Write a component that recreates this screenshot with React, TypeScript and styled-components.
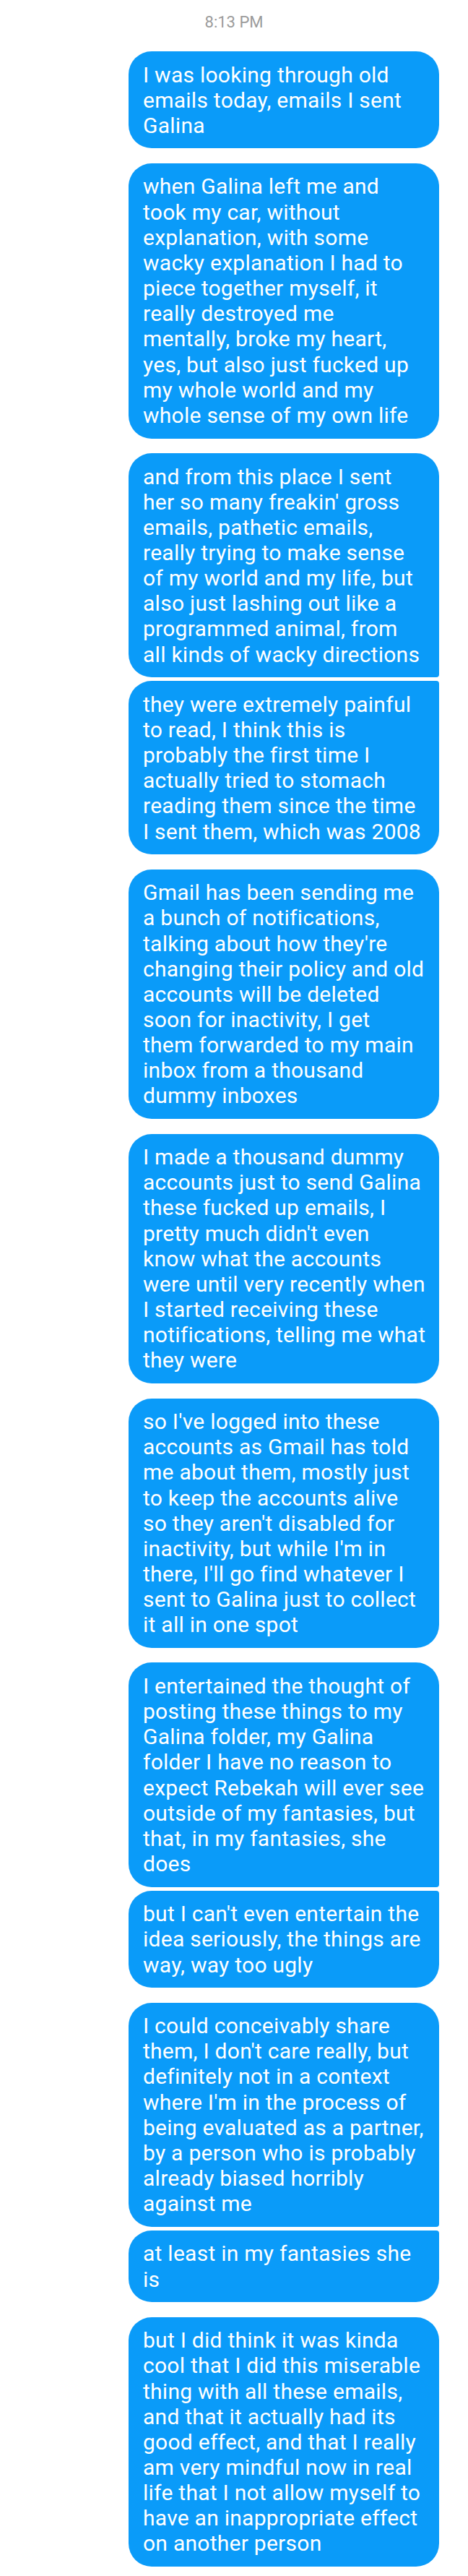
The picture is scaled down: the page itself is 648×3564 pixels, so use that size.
import React from "react";
import styled, { createGlobalStyle, css } from "styled-components";

const GlobalStyle = createGlobalStyle`
  html, body {
    margin: 0;
    padding: 0;
    background: #ffffff;
  }
  body {
    font-family: Roboto, "Noto Sans", "Liberation Sans", sans-serif;
    -webkit-font-smoothing: antialiased;
  }
`;

type Place = "single" | "first" | "last";

const Thread = styled.main`
  display: flex;
  flex-direction: column;
  align-items: stretch;
  width: 648px;
  padding: 18px 40px 12px 178px;
  box-sizing: border-box;
`;

const Timestamp = styled.div`
  align-self: center;
  margin-left: -138px;
  font-size: 22px;
  line-height: normal;
  color: #9b9b9b;
  margin-bottom: 28px;
`;

const Group = styled.section`
  display: flex;
  flex-direction: column;
  gap: 5px;
  & + & {
    margin-top: 20.5px;
  }
`;

const Bubble = styled.div<{ $place: Place }>`
  background: #0a9bf9;
  color: #ffffff;
  font-size: 30px;
  letter-spacing: 0.26px;
  line-height: 35.16px;
  padding: 14.5px 18.5px 14.5px 20px;
  border-radius: 32px;
  ${({ $place }) =>
    $place === "first" &&
    css`
      border-bottom-right-radius: 4px;
    `}
  ${({ $place }) =>
    $place === "last" &&
    css`
      border-top-right-radius: 4px;
    `}
`;

const groups: string[][] = [
  ["I was looking through old emails today, emails I sent Galina"],
  [
    "when Galina left me and took my car, without explanation, with some wacky explanation I had to piece together myself, it really destroyed me mentally, broke my heart, yes, but also just fucked up my whole world and my whole sense of my own life",
  ],
  [
    "and from this place I sent her so many freakin' gross emails, pathetic emails, really trying to make sense of my world and my life, but also just lashing out like a programmed animal, from all kinds of wacky directions",
    "they were extremely painful to read, I think this is probably the first time I actually tried to stomach reading them since the time I sent them, which was 2008",
  ],
  [
    "Gmail has been sending me a bunch of notifications, talking about how they're changing their policy and old accounts will be deleted soon for inactivity, I get them forwarded to my main inbox from a thousand dummy inboxes",
  ],
  [
    "I made a thousand dummy accounts just to send Galina these fucked up emails, I pretty much didn't even know what the accounts were until very recently when I started receiving these notifications, telling me what they were",
  ],
  [
    "so I've logged into these accounts as Gmail has told me about them, mostly just to keep the accounts alive so they aren't disabled for inactivity, but while I'm in there, I'll go find whatever I sent to Galina just to collect it all in one spot",
  ],
  [
    "I entertained the thought of posting these things to my Galina folder, my Galina folder I have no reason to expect Rebekah will ever see outside of my fantasies, but that, in my fantasies, she does",
    "but I can't even entertain the idea seriously, the things are way, way too ugly",
  ],
  [
    "I could conceivably share them, I don't care really, but definitely not in a context where I'm in the process of being evaluated as a partner, by a person who is probably already biased horribly against me",
    "at least in my fantasies she is",
  ],
  [
    "but I did think it was kinda cool that I did this miserable thing with all these emails, and that it actually had its good effect, and that I really am very mindful now in real life that I not allow myself to have an inappropriate effect on another person",
  ],
];

function placeOf(index: number, count: number): Place {
  if (count === 1) return "single";
  return index === 0 ? "first" : "last";
}

export default function App() {
  return (
    <>
      <GlobalStyle />
      <Thread>
        <Timestamp>8:13 PM</Timestamp>
        {groups.map((messages, gi) => (
          <Group key={gi}>
            {messages.map((text, mi) => (
              <Bubble key={mi} $place={placeOf(mi, messages.length)}>
                {text}
              </Bubble>
            ))}
          </Group>
        ))}
      </Thread>
    </>
  );
}
